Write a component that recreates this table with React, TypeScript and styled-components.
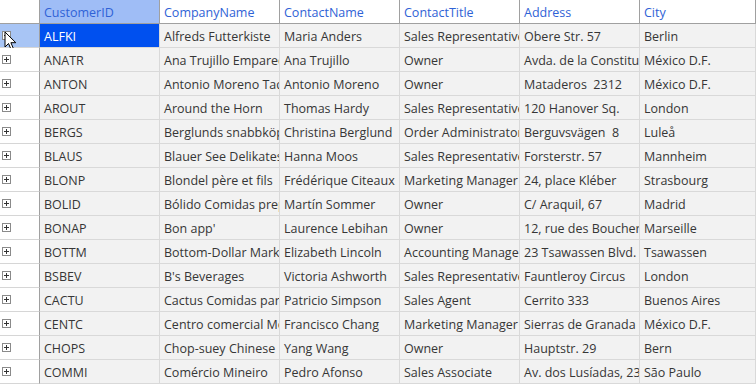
import styled, { createGlobalStyle } from 'styled-components';

const GlobalStyle = createGlobalStyle`
  html, body {
    margin: 0;
    padding: 0;
    background: #ffffff;
  }
  body {
    font-family: 'Open Sans', 'Noto Sans', sans-serif;
  }
`;

const columns = ['CustomerID', 'CompanyName', 'ContactName', 'ContactTitle', 'Address', 'City'];

const customers = [
  ['ALFKI', 'Alfreds Futterkiste', 'Maria Anders', 'Sales Representative', 'Obere Str. 57', 'Berlin'],
  ['ANATR', 'Ana Trujillo Emparedados y helados', 'Ana Trujillo', 'Owner', 'Avda. de la Constitución 2222', 'México D.F.'],
  ['ANTON', 'Antonio Moreno Taquería', 'Antonio Moreno', 'Owner', 'Mataderos  2312', 'México D.F.'],
  ['AROUT', 'Around the Horn', 'Thomas Hardy', 'Sales Representative', '120 Hanover Sq.', 'London'],
  ['BERGS', 'Berglunds snabbköp', 'Christina Berglund', 'Order Administrator', 'Berguvsvägen  8', 'Luleå'],
  ['BLAUS', 'Blauer See Delikatessen', 'Hanna Moos', 'Sales Representative', 'Forsterstr. 57', 'Mannheim'],
  ['BLONP', 'Blondel père et fils', 'Frédérique Citeaux', 'Marketing Manager', '24, place Kléber', 'Strasbourg'],
  ['BOLID', 'Bólido Comidas preparadas', 'Martín Sommer', 'Owner', 'C/ Araquil, 67', 'Madrid'],
  ['BONAP', "Bon app'", 'Laurence Lebihan', 'Owner', '12, rue des Bouchers', 'Marseille'],
  ['BOTTM', 'Bottom-Dollar Markets', 'Elizabeth Lincoln', 'Accounting Manager', '23 Tsawassen Blvd.', 'Tsawassen'],
  ['BSBEV', "B's Beverages", 'Victoria Ashworth', 'Sales Representative', 'Fauntleroy Circus', 'London'],
  ['CACTU', 'Cactus Comidas para llevar', 'Patricio Simpson', 'Sales Agent', 'Cerrito 333', 'Buenos Aires'],
  ['CENTC', 'Centro comercial Moctezuma', 'Francisco Chang', 'Marketing Manager', 'Sierras de Granada 9993', 'México D.F.'],
  ['CHOPS', 'Chop-suey Chinese', 'Yang Wang', 'Owner', 'Hauptstr. 29', 'Bern'],
  ['COMMI', 'Comércio Mineiro', 'Pedro Afonso', 'Sales Associate', 'Av. dos Lusíadas, 23', 'São Paulo'],
];

const GRID = '40px repeat(5, 120px) 1fr';

function ExpandIcon() {
  return (
    <svg width="9" height="9" viewBox="0 0 9 9">
      <rect x="0.5" y="0.5" width="8" height="8" fill="#ffffff" stroke="#8a8a8a" />
      <path d="M2 4.5h5M4.5 2v5" stroke="#333333" strokeWidth="1" />
    </svg>
  );
}

function Cursor() {
  return (
    <svg width="14" height="21" viewBox="0 0 14 21">
      <path
        d="M1 1 L1 16 L4.5 12.5 L7.3 19 L9.6 18 L6.9 11.7 L11.8 11.7 Z"
        fill="#ffffff"
        stroke="#000000"
        strokeWidth="1"
        strokeLinejoin="round"
      />
    </svg>
  );
}

function App() {
  return (
    <>
      <GlobalStyle />
      <Grid>
        <HeaderRow>
          <Corner />
          {columns.map((c, i) => (
            <HeaderCell key={c} $active={i === 0}>
              {c}
            </HeaderCell>
          ))}
        </HeaderRow>
        {customers.map((row, r) => (
          <Row key={row[0]}>
            <RowHeader $current={r === 0}>
              <ExpandIcon />
              {r === 0 && (
                <CursorWrap>
                  <Cursor />
                </CursorWrap>
              )}
            </RowHeader>
            {row.map((v, c) => (
              <Cell key={c} $selected={r === 0 && c === 0}>
                {v}
              </Cell>
            ))}
          </Row>
        ))}
      </Grid>
    </>
  );
}

export default App;

const Grid = styled.div`
  width: 756px;
  height: 384px;
  overflow: hidden;
  background: #ffffff;
  font-size: 12.5px;
`;

const HeaderRow = styled.div`
  display: grid;
  grid-template-columns: ${GRID};
  height: 24px;
  box-sizing: border-box;
  border-bottom: 1px solid #a0a0a0;
`;

const Corner = styled.div`
  background: #ffffff;
  border-right: 1px solid #a0a0a0;
`;

const HeaderCell = styled.div<{ $active?: boolean }>`
  display: flex;
  align-items: center;
  padding: 1px 0 0 4px;
  background: ${(p) => (p.$active ? '#9fbdf6' : '#ffffff')};
  color: #2f62d6;
  border-right: 1px solid #a0a0a0;
  white-space: pre;
  overflow: hidden;
`;

const Row = styled.div`
  display: grid;
  grid-template-columns: ${GRID};
  height: 24px;
`;

const RowHeader = styled.div<{ $current?: boolean }>`
  position: relative;
  display: flex;
  align-items: center;
  padding-left: 2px;
  box-sizing: border-box;
  background: ${(p) => (p.$current ? '#a8c5f5' : '#ffffff')};
  border-right: 1px solid #a0a0a0;
  border-bottom: 1px solid #d6d6d6;
`;

const CursorWrap = styled.div`
  position: absolute;
  left: 4px;
  top: 7px;
  line-height: 0;
`;

const Cell = styled.div<{ $selected?: boolean }>`
  display: flex;
  align-items: center;
  padding: 1px 0 0 4px;
  box-sizing: border-box;
  white-space: pre;
  overflow: hidden;
  background: ${(p) => (p.$selected ? '#0050ef' : '#f2f2f2')};
  color: ${(p) => (p.$selected ? '#ffffff' : '#363636')};
  border-right: 1px solid #d9d9d9;
  border-bottom: 1px solid #d9d9d9;
`;
